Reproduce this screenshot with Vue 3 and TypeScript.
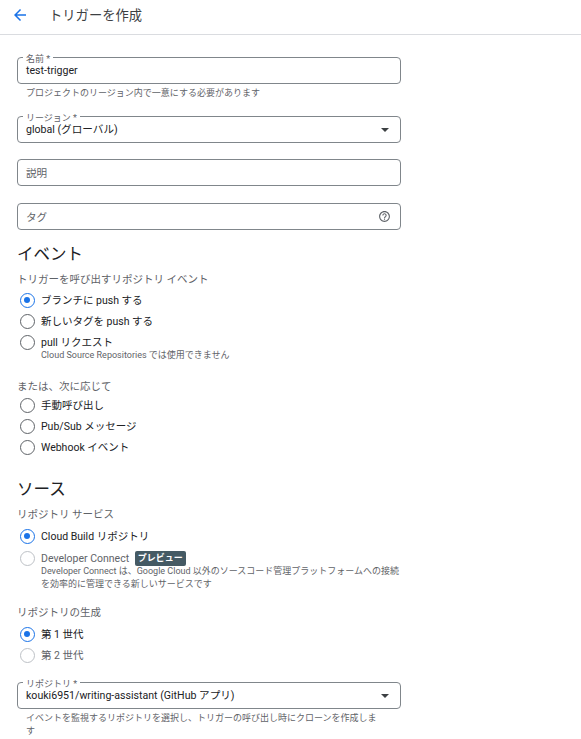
<script setup lang="ts">
interface Radio {
  label: string
  checked?: boolean
  disabled?: boolean
  hint?: string
  badge?: string
}

const eventRadios: Radio[] = [
  { label: 'ブランチに push する', checked: true },
  { label: '新しいタグを push する' },
  { label: 'pull リクエスト', hint: 'Cloud Source Repositories では使用できません' },
]
const manualRadios: Radio[] = [
  { label: '手動呼び出し' },
  { label: 'Pub/Sub メッセージ' },
  { label: 'Webhook イベント' },
]
const serviceRadios: Radio[] = [
  { label: 'Cloud Build リポジトリ', checked: true },
  {
    label: 'Developer Connect',
    disabled: true,
    badge: 'プレビュー',
    hint: 'Developer Connect は、Google Cloud 以外のソースコード管理プラットフォームへの接続を効率的に管理できる新しいサービスです',
  },
]
const generationRadios: Radio[] = [
  { label: '第 1 世代', checked: true },
  { label: '第 2 世代', disabled: true },
]
</script>

<template>
  <div class="page">
    <header class="topbar">
      <svg class="back" width="18" height="18" viewBox="0 0 24 24">
        <path d="M20 11H7.83l5.59-5.59L12 4l-8 8 8 8 1.41-1.41L7.83 13H20v-2z" />
      </svg>
      <h1>トリガーを作成</h1>
    </header>

    <main class="form">
      <div class="field first">
        <span class="float">名前 *</span>
        <span class="value">test-trigger</span>
      </div>
      <p class="help">プロジェクトのリージョン内で一意にする必要があります</p>

      <div class="field region">
        <span class="float">リージョン *</span>
        <span class="value">global (グローバル)</span>
        <i class="caret"></i>
      </div>

      <div class="field desc"><span class="placeholder">説明</span></div>

      <div class="field tag">
        <span class="placeholder">タグ</span>
        <svg class="help-icon" width="13" height="13" viewBox="0 0 24 24">
          <path d="M11 18h2v-2h-2v2zm1-16C6.48 2 2 6.48 2 12s4.48 10 10 10 10-4.48 10-10S17.52 2 12 2zm0 18c-4.41 0-8-3.59-8-8s3.59-8 8-8 8 3.59 8 8-3.59 8-8 8zm0-14c-2.21 0-4 1.79-4 4h2c0-1.1.9-2 2-2s2 .9 2 2c0 2-3 1.75-3 5h2c0-2.25 3-2.5 3-5 0-2.21-1.79-4-4-4z" />
        </svg>
      </div>

      <h2 class="event-title">イベント</h2>
      <p class="group-label event-label">トリガーを呼び出すリポジトリ イベント</p>
      <div class="radios">
        <div v-for="r in eventRadios" :key="r.label" class="radio" :class="{ on: r.checked }">
          <span class="dot"></span>
          <div class="radio-text">
            <span class="radio-label">{{ r.label }}</span>
            <span v-if="r.hint" class="radio-hint">{{ r.hint }}</span>
          </div>
        </div>
      </div>

      <p class="group-label or">または、次に応じて</p>
      <div class="radios manual">
        <div v-for="r in manualRadios" :key="r.label" class="radio">
          <span class="dot"></span>
          <div class="radio-text">
            <span class="radio-label">{{ r.label }}</span>
          </div>
        </div>
      </div>

      <h2 class="source-title">ソース</h2>
      <p class="group-label source-label">リポジトリ サービス</p>
      <div class="radios service">
        <div
          v-for="r in serviceRadios"
          :key="r.label"
          class="radio"
          :class="{ on: r.checked, off: r.disabled }"
        >
          <span class="dot"></span>
          <div class="radio-text">
            <span class="radio-label">
              {{ r.label }}
              <b v-if="r.badge" class="badge">{{ r.badge }}</b>
            </span>
            <span v-if="r.hint" class="radio-hint tall">{{ r.hint }}</span>
          </div>
        </div>
      </div>

      <p class="group-label gen">リポジトリの生成</p>
      <div class="radios generation">
        <div
          v-for="r in generationRadios"
          :key="r.label"
          class="radio"
          :class="{ on: r.checked, off: r.disabled }"
        >
          <span class="dot"></span>
          <div class="radio-text">
            <span class="radio-label">{{ r.label }}</span>
          </div>
        </div>
      </div>

      <div class="field repo">
        <span class="float">リポジトリ *</span>
        <span class="value">kouki6951/writing-assistant (GitHub アプリ)</span>
        <i class="caret"></i>
      </div>
      <p class="help repo-help">イベントを監視するリポジトリを選択し、トリガーの呼び出し時にクローンを作成します</p>
    </main>
  </div>
</template>

<style>
html,
body {
  margin: 0;
  background: #fff;
  overflow: hidden;
}
</style>

<style scoped>
.page {
  width: 581px;
  height: 739px;
  overflow: hidden;
  font-family: Roboto, "Noto Sans CJK JP", sans-serif;
  color: #202124;
  font-size: 10.5px;
}

.topbar {
  box-sizing: border-box;
  display: flex;
  align-items: center;
  height: 35px;
  padding: 0 0 5px 11px;
  border-bottom: 1px solid #dadce0;
}

.back {
  fill: #1a73e8;
}

h1 {
  margin: 0 0 0 20px;
  font-size: 13.3px;
  font-weight: 400;
  color: #3c4043;
}

.form {
  width: 384px;
  padding-left: 17px;
}

.field {
  position: relative;
  box-sizing: border-box;
  display: flex;
  align-items: center;
  height: 27px;
  padding: 0 8px;
  border: 1px solid #80868b;
  border-radius: 4px;
}

.first {
  margin-top: 22px;
}

.region {
  margin-top: 17px;
}

.desc {
  margin-top: 16px;
}

.tag {
  margin-top: 17px;
}

.float {
  position: absolute;
  left: 5px;
  top: -4px;
  padding: 0 3px;
  background: #fff;
  color: #5f6368;
  font-size: 9px;
  line-height: 10px;
}

.value {
  font-size: 10.6px;
  line-height: 14px;
  margin-top: 1px;
}

.placeholder {
  color: #5f6368;
  font-size: 10.6px;
}

.caret {
  position: absolute;
  right: 11px;
  top: 11px;
  border-left: 4px solid transparent;
  border-right: 4px solid transparent;
  border-top: 4px solid #3c4043;
}

.help-icon {
  position: absolute;
  right: 9.5px;
  top: 5.5px;
  fill: #5f6368;
}

.help {
  margin: 3px 0 0 9px;
  font-size: 9px;
  line-height: 12px;
  color: #5f6368;
}

h2 {
  margin: 0;
  font-size: 16.5px;
  font-weight: 400;
  line-height: 20px;
  color: #202124;
}

.event-title {
  margin-top: 15px;
}

.source-title {
  margin-top: 25px;
}

.group-label {
  margin: 7px 0 0;
  font-size: 10.5px;
  line-height: 14px;
  color: #5f6368;
}

.event-label {
  margin-top: 8px;
}

.source-label {
  margin-top: 8px;
}

.or {
  margin-top: 19px;
}

.gen {
  margin-top: 15px;
}

.radios {
  display: flex;
  flex-direction: column;
  gap: 6px;
  margin-top: 6px;
  padding-left: 3px;
}

.manual {
  margin-top: 4px;
}

.service {
  gap: 7px;
  margin-top: 7px;
}

.generation {
  margin-top: 7px;
}

.radio {
  display: flex;
  gap: 6px;
  align-items: flex-start;
}

.dot {
  position: relative;
  flex: none;
  box-sizing: border-box;
  width: 15px;
  height: 15px;
  border: 1.3px solid #5f6368;
  border-radius: 50%;
}

.on .dot {
  border: 1.5px solid #1a73e8;
}

.on .dot::after {
  content: "";
  position: absolute;
  left: 3px;
  top: 3px;
  width: 6px;
  height: 6px;
  border-radius: 50%;
  background: #1a73e8;
}

.off .dot {
  border-color: #bdc1c6;
}

.off .radio-label {
  color: #5f6368;
}

.radio-text {
  display: flex;
  flex-direction: column;
  min-width: 0;
}

.radio-label {
  height: 14px;
  font-size: 10.5px;
  line-height: 15px;
  color: #202124;
}

.radio-hint {
  font-size: 9px;
  line-height: 12px;
  color: #5f6368;
}

.tall {
  width: 360px;
  line-height: 13px;
}

.badge {
  display: inline-block;
  margin-left: 3px;
  padding: 0 3px;
  background: #455a64;
  color: #fff;
  border-radius: 2px;
  font-size: 9px;
  line-height: 15px;
  font-weight: 700;
  vertical-align: 1px;
}

.repo {
  margin-top: 19px;
}

.repo-help {
  margin-top: 3px;
  padding-right: 24px;
  line-height: 13px;
}
</style>
